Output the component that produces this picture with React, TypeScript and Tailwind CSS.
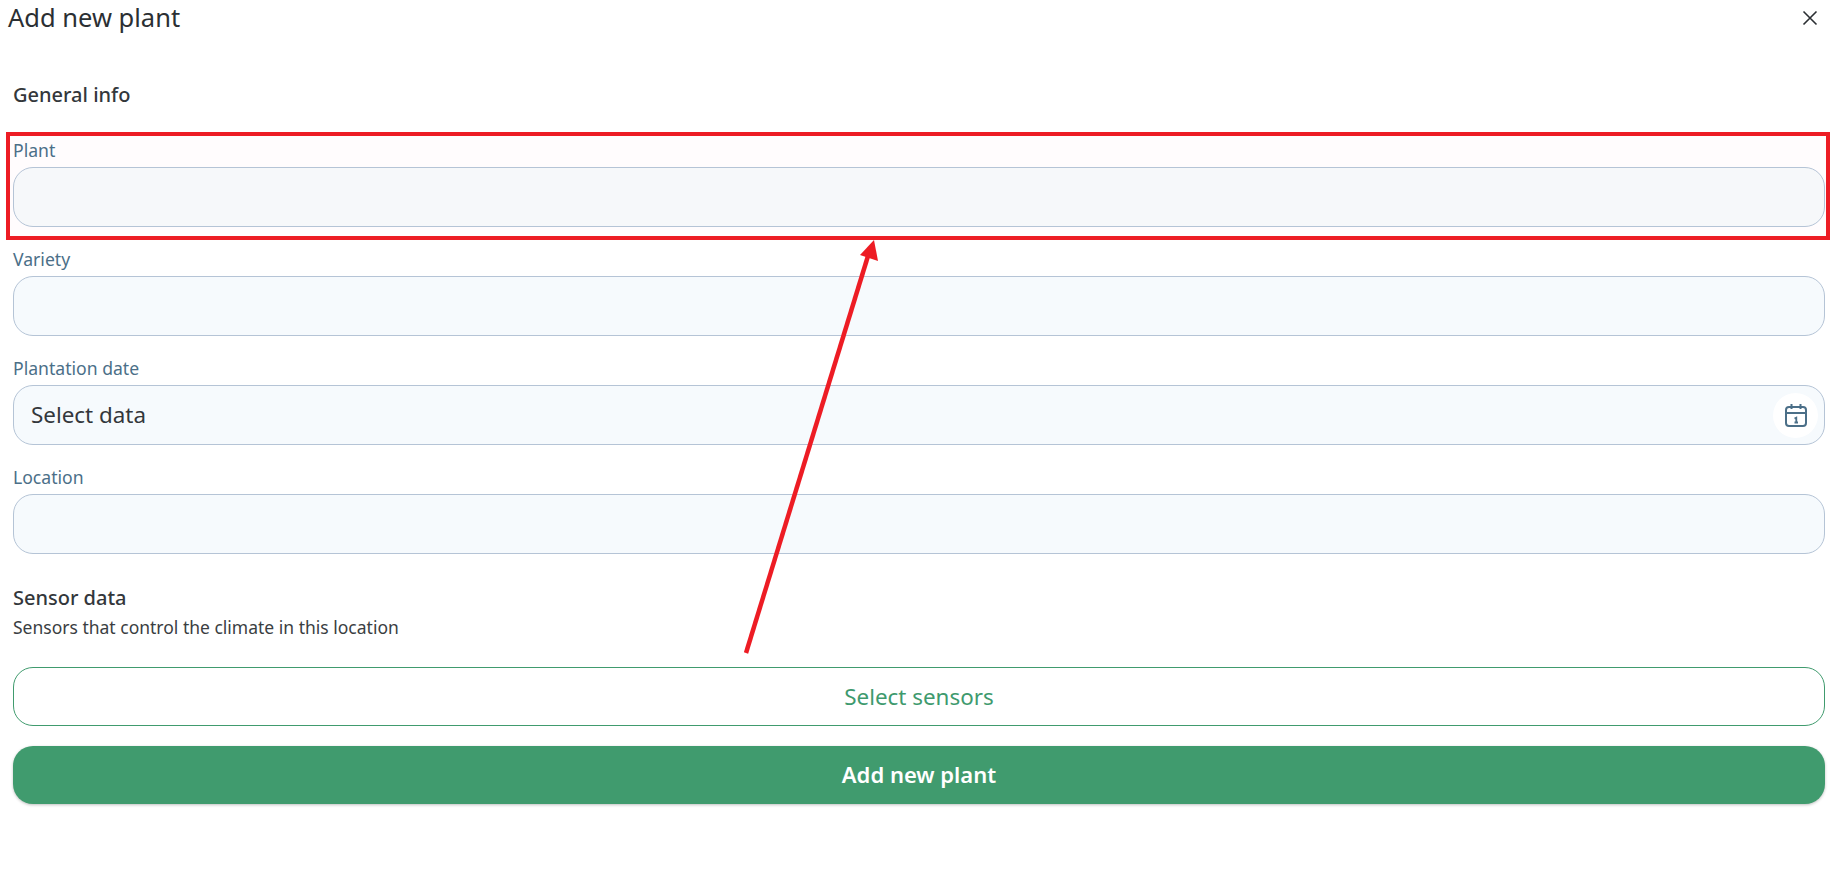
import React from "react";

function Field({ label, tint, children }: { label: string; tint?: boolean; children?: React.ReactNode }) {
  return (
    <div className="flex flex-col">
      <label className="h-[24px] mb-[5px] text-[17.6px] leading-[24px] text-[#4b6f88]">{label}</label>
      <div
        className={
          "h-[60px] rounded-[20px] border border-[#b5c4d6] flex items-center justify-between pl-[17px] pr-[6px] " +
          (tint ? "bg-[#f6f8fa]" : "bg-[#f6fafd]")
        }
      >
        {children}
      </div>
    </div>
  );
}

export default function App() {
  return (
    <div className="relative w-[1832px] h-[881px] bg-white overflow-hidden text-[#2b2f33] font-['Noto_Sans','Open_Sans',sans-serif]">
      {/* annotation: red box behind the form */}
      <div className="absolute left-[6px] top-[132px] w-[1824px] h-[108px] border-[4px] border-[#ed1c24] bg-[#fffcfd]" />

      <div className="relative">
        <div className="flex justify-between h-[36px] pl-[8px] pr-[14px]">
          <h1 className="text-[25.5px] leading-[34px] font-normal">Add new plant</h1>
          <button className="w-[16px] h-[36px] flex items-center justify-center" aria-label="Close">
            <svg width="16" height="16" viewBox="0 0 16 16" fill="none" stroke="#2b2f33" strokeWidth="1.6">
              <path d="M1.5 1.5 14.5 14.5M14.5 1.5 1.5 14.5" />
            </svg>
          </button>
        </div>

        <div className="pl-[13px] pr-[7px]">
          <h2 className="mt-[45px] h-[28px] text-[20px] leading-[28px] font-medium text-[#33373b]">General info</h2>
          <div className="mt-[29px] flex flex-col gap-[20px]">
            <Field label="Plant" tint />
            <Field label="Variety" />
            <Field label="Plantation date">
              <span className="text-[22.4px] text-[#33373b]">Select data</span>
              <span className="w-[45px] h-[45px] rounded-full bg-white flex items-center justify-center">
                <svg width="24" height="24" viewBox="0 0 24 24" fill="none" stroke="#4b6f88" strokeWidth="2">
                  <rect x="2" y="4" width="20" height="19" rx="3" />
                  <path d="M2 10h20M7.500 1v5M16.500 1v5" />
                  <path d="M10.500 15.500l1.800-.8V19.500M10.500 19.500h3.500" strokeWidth="1.800" />
                </svg>
              </span>
            </Field>
            <Field label="Location" />
          </div>
          <h2 className="mt-[30px] h-[28px] text-[20px] leading-[28px] font-medium text-[#33373b]">Sensor data</h2>
          <p className="mt-[3px] h-[24px] text-[17.5px] leading-[24px] text-[#3a3e42]">Sensors that control the climate in this location</p>
          <button className="mt-[28px] w-full h-[59px] rounded-[20px] border border-[#409b6e] bg-white text-[#3e9a6e] text-[22.400px]">
            Select sensors
          </button>
          <button className="mt-[20px] block w-full h-[58px] rounded-[20px] bg-[#409b6e] pb-[2px] text-white text-[22px] font-semibold shadow-[0_1px_3px_rgba(0,0,0,0.25)]">
            Add new plant
          </button>
        </div>
      </div>

      {/* annotation: red arrow */}
      <svg className="absolute left-0 top-0 pointer-events-none" width="1832" height="881" fill="none">
        <path d="M746 653 868 256" stroke="#ed1c24" strokeWidth="4.500" />
        <path d="M874 240 860 255 878 261Z" fill="#ed1c24" />
      </svg>
    </div>
  );
}
